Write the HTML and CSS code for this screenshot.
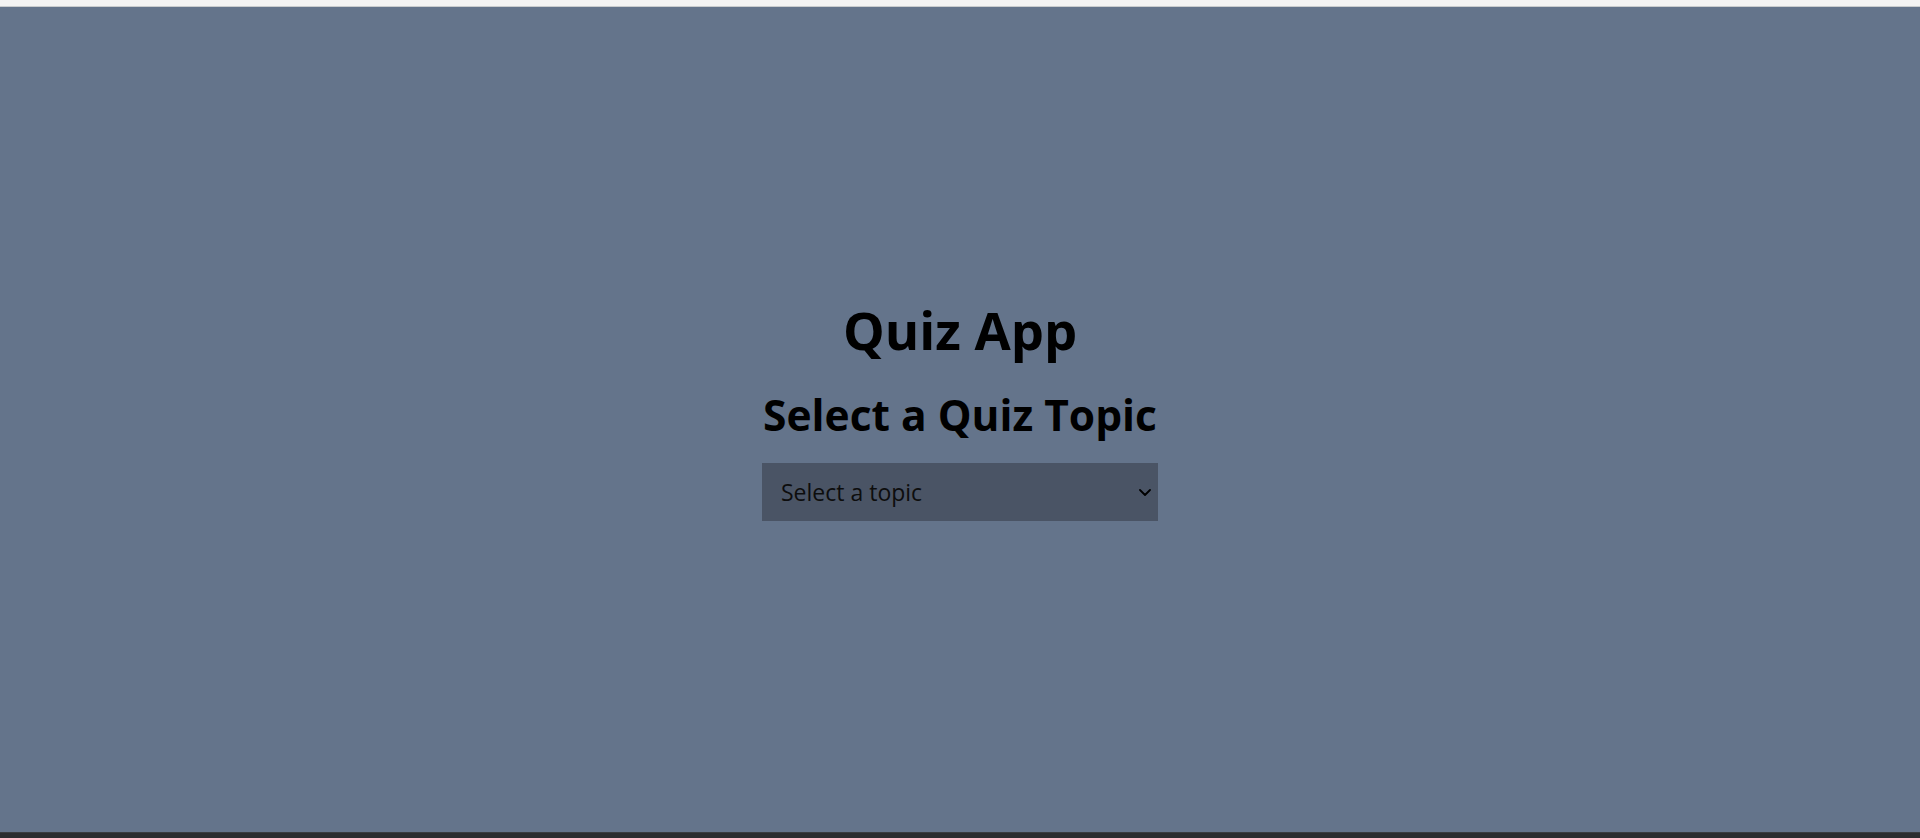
FILE: index.html
```html
<!DOCTYPE html>
<html lang="en">
<head>
<meta charset="utf-8">
<title>Quiz App</title>
<link rel="stylesheet" href="styles.css">
</head>
<body>
<div class="top-strip"></div>
<main class="app">
  <div class="quiz-start">
    <h1 class="title">Quiz App</h1>
    <h2 class="subtitle">Select a Quiz Topic</h2>
    <div class="select-wrap">
      <select class="topic-select">
        <option>Select a topic</option>
        <option>JavaScript</option>
        <option>React</option>
        <option>CSS</option>
      </select>
      <svg class="chevron" width="12" height="7" viewBox="0 0 12 7" aria-hidden="true">
        <path d="M1 1 L6 6 L11 1" fill="none" stroke="#000" stroke-width="1.8" stroke-linecap="round" stroke-linejoin="round"/>
      </svg>
    </div>
  </div>
</main>
<div class="bottom-strip"></div>
</body>
</html>
```

FILE: styles.css
```css
html, body {
  margin: 0;
  padding: 0;
}

body {
  font-family: "Open Sans", "Noto Sans", sans-serif;
  color: #000;
  background: #64748b;
  height: 838px;
  overflow: hidden;
  display: flex;
  flex-direction: column;
}

.top-strip {
  height: 6px;
  background: #f3f3f3;
  border-bottom: 1px solid #c9ccce;
}

.bottom-strip {
  height: 5px;
  background: #2b2d2f;
  border-top: 1px solid #3a3d40;
}

.app {
  flex: 1;
  display: flex;
  align-items: center;
  justify-content: center;
  background: #64748b;
}

.quiz-start {
  display: flex;
  flex-direction: column;
  align-items: center;
  padding-bottom: 18px;
}

.title {
  margin: 0;
  font-size: 52.5px;
  font-weight: 700;
  line-height: 60px;
}

.subtitle {
  margin: 30px 0 0;
  font-size: 42.5px;
  font-weight: 700;
  line-height: 50px;
}

.select-wrap {
  position: relative;
  margin-top: 23px;
  width: 396px;
}

.topic-select {
  display: block;
  appearance: none;
  -webkit-appearance: none;
  width: 100%;
  height: 58px;
  margin: 0;
  padding: 0 40px 0 19px;
  border: none;
  border-radius: 0;
  background: #4a5465;
  color: #0d0d0d;
  font-family: "Open Sans", "Noto Sans", sans-serif;
  font-size: 23px;
  outline: none;
}

.chevron {
  position: absolute;
  right: 7px;
  top: 26px;
  pointer-events: none;
}
```
